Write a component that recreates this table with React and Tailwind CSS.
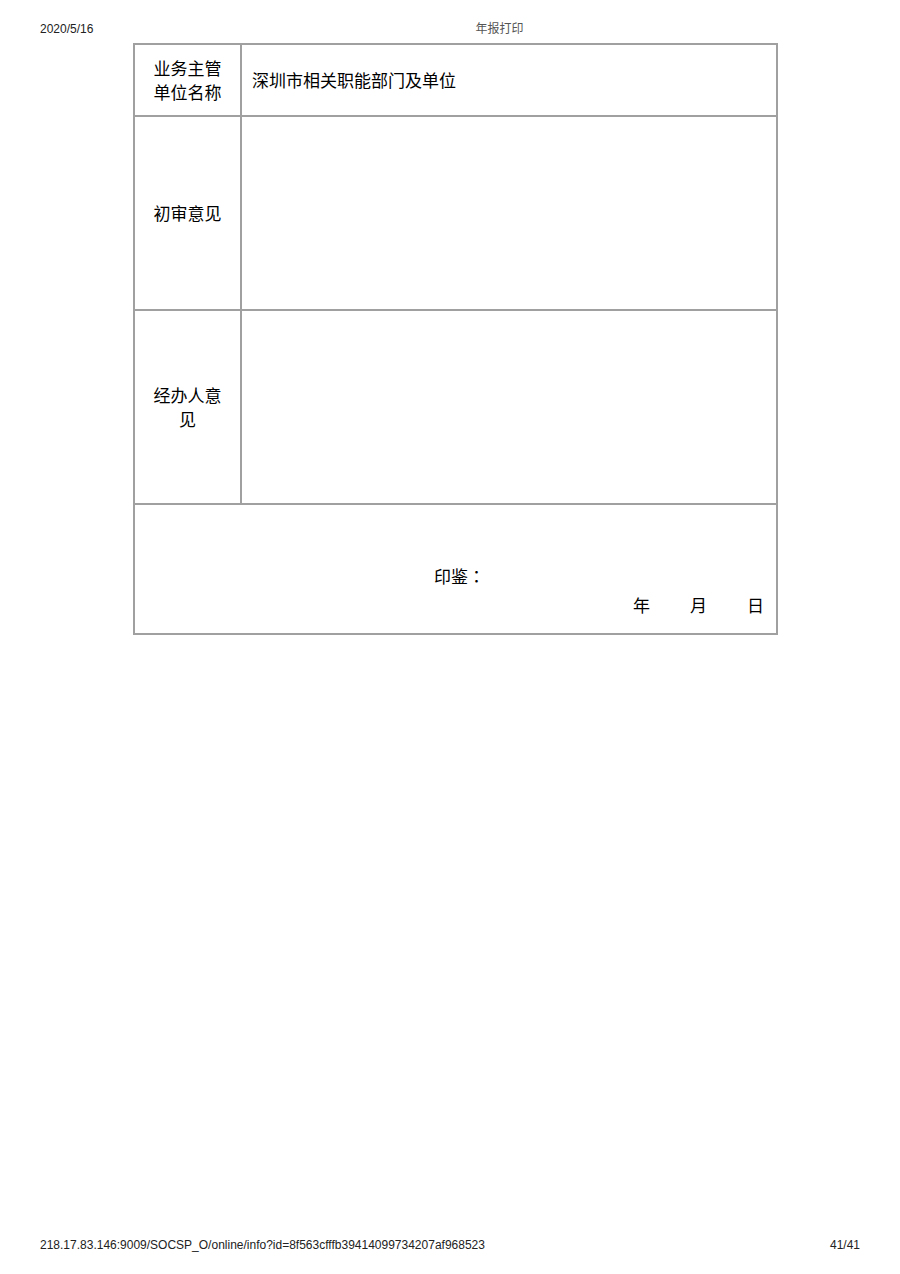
export default function App() {
  const cjk = "font-['Noto_Sans_CJK_SC',sans-serif]"
  const line = "border-[#a0a0a0]"

  return (
    <div className="w-[900px] h-[1274px] bg-white flex flex-col text-black">
      {/* print header */}
      <div className="flex items-center h-[16px] mt-[21px] px-[40px] text-[12px] leading-[16px]">
        <span className="font-['Liberation_Sans',sans-serif] text-[#222]">2020/5/16</span>
        <span className="ml-[382px] font-['Liberation_Serif','Noto_Sans_CJK_SC',serif] text-[#555]">年报打印</span>
      </div>

      <div className={`ml-[133px] mt-[6px] w-[645px] border-2 ${line} ${cjk} text-[17px] leading-[24px]`}>
        <div className={`flex h-[72px] border-b-2 ${line}`}>
          <div className={`w-[107px] border-r-2 ${line} flex items-center justify-center px-3 text-center`}>
            业务主管单位名称
          </div>
          <div className="flex-1 flex items-center pl-[10px]">深圳市相关职能部门及单位</div>
        </div>

        <div className={`flex h-[194px] border-b-2 ${line}`}>
          <div className={`w-[107px] border-r-2 ${line} flex items-center justify-center px-3 text-center`}>
            初审意见
          </div>
          <div className="flex-1" />
        </div>

        <div className={`flex h-[194px] border-b-2 ${line}`}>
          <div className={`w-[107px] border-r-2 ${line} flex items-center justify-center px-3 text-center`}>
            经办人意见
          </div>
          <div className="flex-1" />
        </div>

        <div className="h-[128px] flex flex-col justify-end pb-[16px]">
          <div className="text-center pl-[8px]">
            印鉴<span className="font-['Noto_Sans_CJK_TC',sans-serif]">：</span>
          </div>
          <div className="flex justify-end gap-[40px] pr-[12px] mt-[5px]">
            <span>年</span>
            <span>月</span>
            <span>日</span>
          </div>
        </div>
      </div>

      {/* print footer */}
      <div className="mt-auto mb-[21px] flex items-center justify-between px-[40px] text-[12px] leading-[16px] font-['Liberation_Sans',sans-serif] text-[#222]">
        <span>218.17.83.146:9009/SOCSP_O/online/info?id=8f563cfffb39414099734207af968523</span>
        <span>41/41</span>
      </div>
    </div>
  )
}
